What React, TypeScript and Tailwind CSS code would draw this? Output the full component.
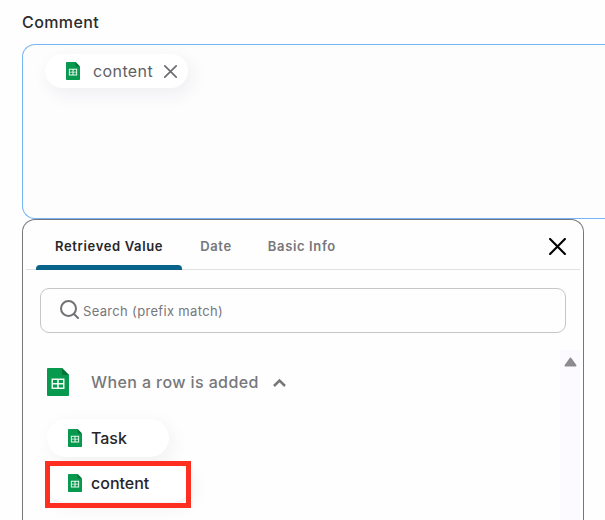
import React from "react";

const font = "font-['Inter','Liberation_Sans',sans-serif]";

function SheetIcon({ className }: { className: string }) {
  return (
    <svg viewBox="0 0 22 28" className={className} aria-hidden="true">
      <path d="M1 0h14l7 7v20a1 1 0 0 1-1 1H1a1 1 0 0 1-1-1V1a1 1 0 0 1 1-1z" fill="#07994d" />
      <path d="M15 0l7 7h-5.500a1.500 1.500 0 0 1-1.500-1.500z" fill="#087339" />
      <path
        fillRule="evenodd"
        d="M4.500 10.500h13v10.500h-13zM6 12v3h4.200v-3zM11.800 12v3h4.200v-3zM6 16.500v3h4.200v-3zM11.800 16.500v3h4.200v-3z"
        fill="#eefaf2"
      />
    </svg>
  );
}

function CloseIcon({ className, weight }: { className: string; weight: number }) {
  return (
    <svg viewBox="0 0 16 16" className={className} fill="none" stroke="currentColor" strokeWidth={weight} strokeLinecap="round" aria-hidden="true">
      <path d="M1 1l14 14M15 1L1 15" />
    </svg>
  );
}

function CommentField() {
  return (
    <section>
      <h2 id="comment-label" className="text-base leading-6 font-medium tracking-wide text-[#2b2b2d]">
        Comment
      </h2>
      <div
        role="textbox"
        aria-labelledby="comment-label"
        aria-multiline="true"
        tabIndex={0}
        className="mt-[10px] h-[175px] rounded-l-[13px] border border-r-0 border-[#74b5f5] bg-[#fdfdfe] pt-[9px] pl-[22px] outline-none"
      >
        <span className="inline-flex h-[34px] items-center rounded-full bg-white pr-[11px] pl-[21px] shadow-[4px_6px_18px_rgba(40,30,60,0.07)]">
          <SheetIcon className="h-[18px] w-[14px]" />
          <span className="ml-[13px] text-base leading-6 tracking-wide text-[#5f5f63]">content</span>
          <button type="button" aria-label="Remove content" className="ml-[11px] text-[#6b6b70]">
            <CloseIcon className="size-[13px]" weight={2} />
          </button>
        </span>
      </div>
    </section>
  );
}

function Tabs() {
  const base = "flex h-full items-center pt-[2px] text-[13px] leading-5 font-semibold tracking-wider";
  return (
    <div className="mx-[3px] flex h-[50px] items-center border-b border-[#e2e2e4] pr-[14px] pl-[10px]">
      <div role="tablist" className="flex h-full">
        <button type="button" role="tab" aria-selected="true" className={`${base} relative px-[19px] text-[#26262a]`}>
          Retrieved Value
          <span className="absolute inset-x-0 -bottom-px h-[5px] rounded-t-[4px] bg-[#08638a]" />
        </button>
        <button type="button" role="tab" aria-selected="false" className={`${base} px-[18px] text-[#77777b]`}>
          Date
        </button>
        <button type="button" role="tab" aria-selected="false" className={`${base} px-[18px] text-[#77777b]`}>
          Basic Info
        </button>
      </div>
      <button type="button" aria-label="Close" className="mt-1 ml-auto text-black">
        <CloseIcon className="size-[17px]" weight={2} />
      </button>
    </div>
  );
}

function SearchBox() {
  return (
    <label className="mx-[17px] mt-[18px] flex h-[45px] items-center rounded-[9px] border border-[#c6c6c8] pl-[19px]">
      <svg viewBox="0 0 19 19" className="mr-1 mb-[2px] size-[19px] shrink-0" fill="none" stroke="#727276" strokeWidth="2" strokeLinecap="round" aria-hidden="true">
        <circle cx="8.500" cy="8.500" r="7.500" />
        <path d="M14 14l4 4" />
      </svg>
      <input
        type="text"
        aria-label="Search"
        placeholder="Search (prefix match)"
        className="min-w-0 flex-1 bg-transparent text-[13px] leading-5 tracking-wide text-[#3c3c40] outline-none placeholder:text-[#77777b]"
      />
    </label>
  );
}

function ValueChip({ name, marked = false }: { name: string; marked?: boolean }) {
  return (
    <li className="relative w-max">
      <button
        type="button"
        className="flex h-[38px] items-center rounded-full bg-white pr-[42px] pl-[21px] shadow-[4px_5px_18px_rgba(40,30,60,0.06)]"
      >
        <SheetIcon className="h-[18px] w-[14px]" />
        <span className="ml-[9px] text-base leading-6 font-medium text-[#26262a]">{name}</span>
      </button>
      {marked && <span className="absolute -top-[3px] right-0 -bottom-[6px] -left-[2px] border-[5px] border-[#fe2e20] bg-transparent" />}
    </li>
  );
}

function ValueList() {
  return (
    <div className="mt-[17px] mr-[3px] flex flex-1">
      <div className="flex-1 pt-[18px] pl-[24px]">
        <button type="button" aria-expanded="true" className="flex items-center text-[#77777b]">
          <SheetIcon className="h-[28px] w-[22px]" />
          <span className="ml-[22px] text-base leading-6 font-medium tracking-wide">When a row is added</span>
          <svg viewBox="0 0 13 9" className="ml-[14px] h-[9px] w-[13px]" fill="none" stroke="currentColor" strokeWidth="2.500" aria-hidden="true">
            <path d="M1 8l5.500-5.500L12 8" />
          </svg>
        </button>
        <ul className="mt-[23px] flex flex-col gap-[7px]">
          <ValueChip name="Task" />
          <ValueChip name="content" marked />
        </ul>
      </div>
      <div className="flex w-5 justify-center bg-[#fcfafe] pt-[7px]">
        <svg viewBox="0 0 13 10" className="h-[10px] w-[13px]" aria-hidden="true">
          <path d="M6.500 1.500L11.500 8.500h-10z" fill="#8c8c8e" stroke="#8c8c8e" strokeWidth="2" strokeLinejoin="round" />
        </svg>
      </div>
    </div>
  );
}

export default function App() {
  return (
    <main className={`${font} flex h-screen flex-col overflow-hidden bg-[#fefefe] pt-[10px] pl-[22px]`}>
      <CommentField />
      <section className="mr-[21px] flex flex-1 shrink-0 flex-col rounded-t-[13px] border border-b-0 border-[#77777b] bg-[#fefefe]">
        <Tabs />
        <SearchBox />
        <ValueList />
      </section>
    </main>
  );
}
